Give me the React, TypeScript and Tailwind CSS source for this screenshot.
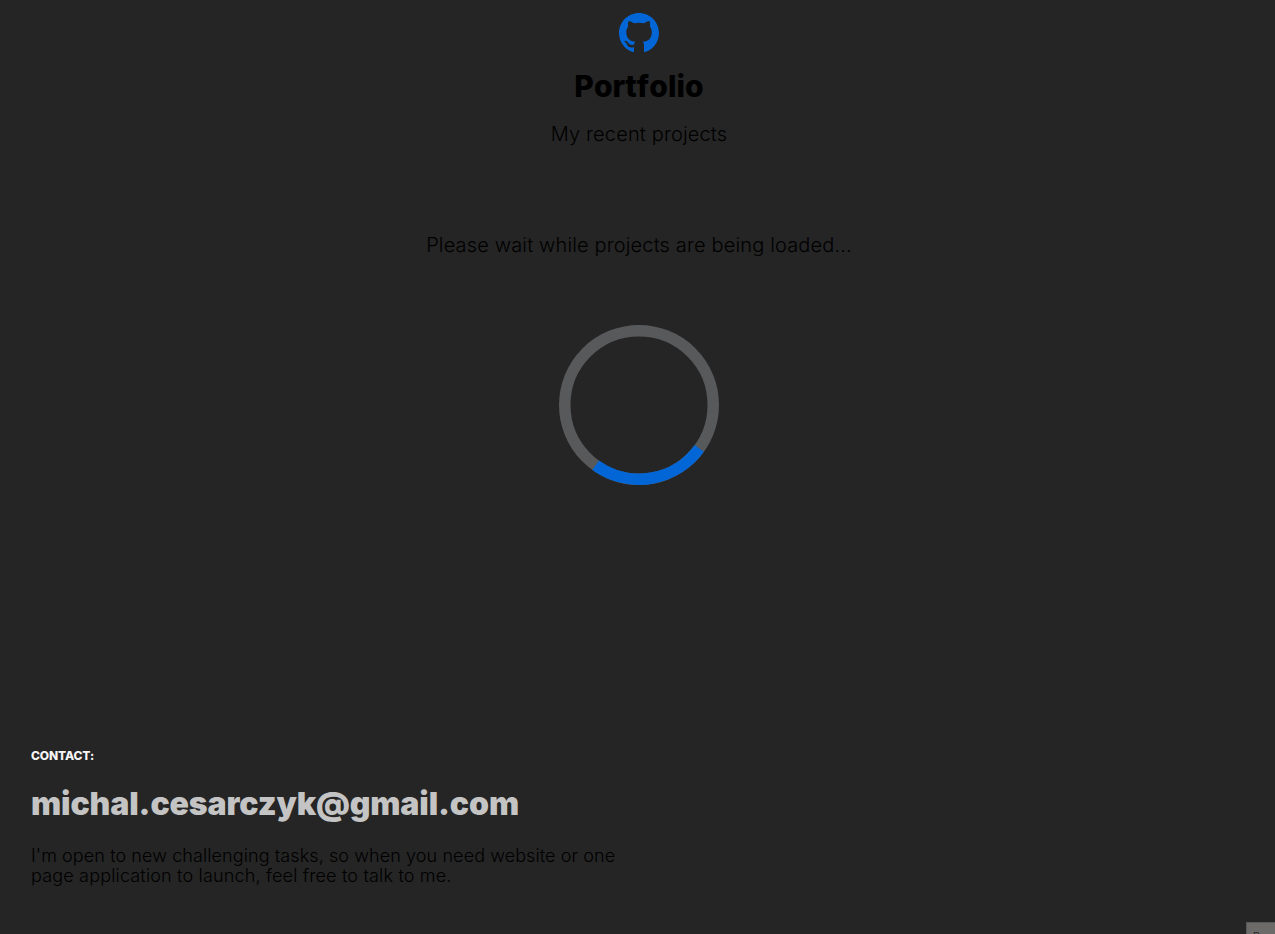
function GithubMark() {
  return (
    <svg viewBox="0 0 16 16" className="block h-10 w-10 fill-[#0366d6]" aria-hidden="true">
      <path d="M8 0C3.58 0 0 3.58 0 8c0 3.54 2.29 6.53 5.47 7.59.4.07.55-.17.55-.38 0-.19-.01-.82-.01-1.49-2.01.37-2.53-.49-2.69-.94-.09-.23-.48-.94-.82-1.13-.28-.15-.68-.52-.01-.53.63-.01 1.08.58 1.23.82.72 1.21 1.87.87 2.33.66.07-.52.28-.87.51-1.07-1.78-.2-3.64-.89-3.64-3.95 0-.87.31-1.59.82-2.15-.08-.2-.36-1.02.08-2.12 0 0 .67-.21 2.2.82.64-.18 1.32-.27 2-.27s1.36.09 2 .27c1.53-1.04 2.2-.82 2.2-.82.44 1.1.16 1.92.08 2.12.51.56.82 1.27.82 2.15 0 3.07-1.87 3.75-3.65 3.95.29.25.54.73.54 1.48 0 1.07-.01 1.93-.01 2.2 0 .21.15.46.55.38A8.01 8.01 0 0 0 16 8c0-4.42-3.58-8-8-8Z" />
    </svg>
  );
}

function Spinner() {
  return (
    <svg viewBox="0 0 160 160" className="mt-[68px] block h-40 w-40 fill-none" role="status">
      <circle cx="80" cy="80" r="74.25" strokeWidth="11.5" className="stroke-[#58595b]" />
      <circle
        cx="80"
        cy="80"
        r="74.25"
        strokeWidth="11.5"
        pathLength="360"
        strokeDasharray="90 270"
        transform="rotate(35.75 80 80)"
        className="stroke-[#0366d6]"
      />
    </svg>
  );
}

export default function App() {
  return (
    <div className="relative flex h-[934px] w-full flex-col overflow-hidden bg-[#252525] font-['Inter',sans-serif] text-black">
      <main className="flex flex-col items-center pt-[13px] pl-[3px]">
        <GithubMark />
        <h1 className="mt-[15px] text-[30px] leading-9 font-extrabold tracking-[0.1px] [font-kerning:none]">Portfolio</h1>
        <p className="mt-[18px] text-[20px] leading-6 font-light tracking-[0.15px]">My recent projects</p>
        <p className="mt-[87px] text-[20px] leading-6 font-light tracking-[0.15px]">
          Please wait while projects are being loaded...
        </p>
        <Spinner />
      </main>
      <footer className="mt-auto flex flex-col items-start pb-12 pl-[31px]">
        <h2 className="text-[12px] leading-4 font-extrabold tracking-[-0.12px] text-[#f5f5f5]">CONTACT:</h2>
        <span className="mt-5 text-[32px] leading-10 font-black tracking-[-0.12px] text-[#c4c4c4]">
          michal.cesarczyk@gmail.com
        </span>
        <p className="mt-[22px] w-[600px] text-[18px] leading-5 font-light">
          <span className="block tracking-[0.09px]">
            I'm open to new challenging tasks, so when you need website or one
          </span>
          <span className="block tracking-[0.17px]">
            page application to launch, feel free to talk to me.
          </span>
        </p>
      </footer>
      <div className="absolute right-0 bottom-0 h-3 w-[29px] overflow-hidden border-t border-l border-[#575757] bg-[#6c6b6a] pl-[6px] text-[10px] leading-3 text-[#252525]">
        <span className="relative top-[7px]">D</span>
      </div>
    </div>
  );
}
